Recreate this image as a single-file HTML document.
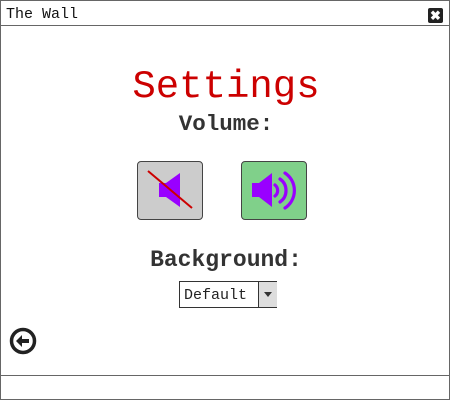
<!DOCTYPE html>
<html><head><style>
body{margin:0;width:450px;height:400px;overflow:hidden;background:#fff;font-family:"Liberation Mono",monospace;}
.win{position:absolute;left:0;top:0;width:448px;height:398px;border:1px solid #666;}
.tb{position:absolute;left:0;top:0;width:448px;height:24px;border-bottom:1px solid #666;}
.tt{position:absolute;left:5px;top:5px;font-size:15px;color:#111;}
.x{position:absolute;left:427px;top:7px;width:15px;height:15px;background:#222;border-radius:2px;color:#fff;font:bold 13px/15px "Liberation Sans",sans-serif;text-align:center;}
.ft{position:absolute;left:0;top:374px;width:448px;border-top:1px solid #666;}
.c{position:absolute;left:0;width:450px;text-align:center;}
.btn{position:absolute;top:160px;width:64px;height:57px;border:1px solid #444;border-radius:4px;}
</style></head><body>
<div class="win">
<div class="tb"><div class="tt">The Wall</div><div class="x">✖</div></div>
<div class="c" style="top:64px;font-size:39px;color:#c00;">Settings</div>
<div class="c" style="top:110px;font-size:22.5px;font-weight:bold;color:#333;">Volume:</div>
<div class="btn" style="left:136px;background:#ccc;">
<svg width="64" height="57" viewBox="0 0 64 57"><path d="M21 21h7l14-10v34l-14-10h-7z" fill="#9900ff"/><line x1="10" y1="9" x2="54" y2="46" stroke="#cc0000" stroke-width="2"/></svg></div>
<div class="btn" style="left:240px;background:#80d08a;">
<svg width="64" height="57" viewBox="0 0 64 57"><path d="M10 21h7l13-10v34l-13-10h-7z" fill="#9900ff"/><g fill="none" stroke="#9900ff" stroke-width="3.2" stroke-linecap="round"><path d="M33 23a7 7 0 0 1 0 11"/><path d="M38 17a14 14 0 0 1 0 23"/><path d="M43 11a21 21 0 0 1 0 35"/></g></svg></div>
<div class="c" style="top:246px;font-size:23px;font-weight:bold;color:#333;">Background:</div>
<div style="position:absolute;left:178px;top:280px;width:96px;height:25px;border:1px solid #333;">
<div style="position:absolute;left:4px;top:5px;font-size:15px;color:#222;">Default</div>
<div style="position:absolute;left:78px;top:0;width:18px;height:25px;background:#ddd;border-left:1px solid #333;"><div style="position:absolute;left:5px;top:10px;border-left:4px solid transparent;border-right:4px solid transparent;border-top:5px solid #333;"></div></div></div>
<svg style="position:absolute;left:8px;top:326px" width="28" height="28" viewBox="0 0 28 28"><circle cx="14" cy="14" r="11.5" fill="none" stroke="#222" stroke-width="3.5"/><path d="M7 14l6-6v4h7v4h-7v4z" fill="#222"/></svg>
<div class="ft"></div>
</div>
</body></html>
